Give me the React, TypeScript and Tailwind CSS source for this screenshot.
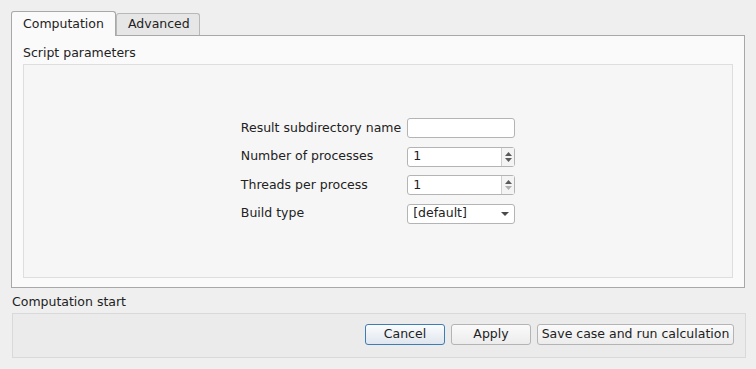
import React from "react"

const font = { fontFamily: '"DejaVu Sans", "Liberation Sans", sans-serif' }

function SpinBox({ value, downDisabled }: { value: string; downDisabled?: boolean }) {
    return (
        <div className="flex h-[20px] w-[108px] rounded-[3px] border border-[#b4b4b4] bg-white">
            <div className="flex flex-1 items-center pl-[5px]">{value}</div>
            <div className="flex w-[13px] flex-col items-center justify-center gap-[2px] border-l border-[#cfcfcf] bg-[#f4f4f4]">
                <svg width="7" height="4" viewBox="0 0 7 4">
                    <path d="M0 4 L3.5 0 L7 4 Z" fill="#5a5a5a" />
                </svg>
                <svg width="7" height="4" viewBox="0 0 7 4">
                    <path d="M0 0 L3.5 4 L7 0 Z" fill={downDisabled ? "#b0b0b0" : "#5a5a5a"} />
                </svg>
            </div>
        </div>
    )
}

export default function App() {
    return (
        <div className="flex h-[369px] w-[756px] flex-col bg-[#efefef] pl-[11px] pt-[11px] text-[12.5px] text-[#222]" style={font}>
            {/* tabs */}
            <div className="flex h-[24px] items-end">
                <div className="relative z-10 -mb-px flex h-[25px] w-[105px] items-center rounded-t-[3px] border border-b-0 border-[#a8a8a8] bg-[#fafafa] pl-[11px]">
                    Computation
                </div>
                <div className="flex h-[22px] w-[84px] items-center rounded-t-[3px] border border-b-0 border-[#b8b8b8] bg-[#e6e6e6] pl-[11px]">
                    Advanced
                </div>
            </div>

            {/* pane */}
            <div className="flex h-[253px] w-[734px] flex-col border border-[#a8a8a8] bg-[#fafafa] px-[11px]">
                <div className="pt-[9px] leading-[16px]">Script parameters</div>
                <div className="mt-[3px] flex h-[214px] items-center justify-center border border-[#dedede] bg-[#f6f6f6]">
                    <div className="grid grid-cols-[auto_auto] items-center gap-x-[6px] gap-y-[8.5px]">
                        <div>Result subdirectory name</div>
                        <div className="h-[20px] w-[108px] rounded-[3px] border border-[#b4b4b4] bg-white" />

                        <div>Number of processes</div>
                        <SpinBox value="1" />

                        <div>Threads per process</div>
                        <SpinBox value="1" downDisabled />

                        <div>Build type</div>
                        <div className="flex h-[20px] w-[108px] items-center justify-between rounded-[3px] border border-[#b4b4b4] bg-white pl-[5px] pr-[5px]">
                            <span>[default]</span>
                            <svg width="8" height="4" viewBox="0 0 8 4">
                                <path d="M0 0 L4 4 L8 0 Z" fill="#4a4a4a" />
                            </svg>
                        </div>
                    </div>
                </div>
            </div>

            {/* computation start */}
            <div className="pl-[1px] pt-[6px] leading-[16px]">Computation start</div>
            <div className="ml-[1px] mt-[3px] flex h-[45px] w-[734px] items-start justify-end gap-[6px] border border-[#d9d9d9] bg-[#ebebeb] pr-[11px] pt-[10px]">
                <button className="h-[21px] w-[80px] rounded-[3px] border border-[#3f7cb4] bg-gradient-to-b from-[#fbfcfd] to-[#dfe6ee]">
                    Cancel
                </button>
                <button className="h-[21px] w-[80px] rounded-[3px] border border-[#b4b4b4] bg-gradient-to-b from-[#fafafa] to-[#ececec]">
                    Apply
                </button>
                <button className="h-[21px] w-[197px] rounded-[3px] border border-[#b4b4b4] bg-gradient-to-b from-[#fafafa] to-[#ececec]">
                    Save case and run calculation
                </button>
            </div>
        </div>
    )
}
